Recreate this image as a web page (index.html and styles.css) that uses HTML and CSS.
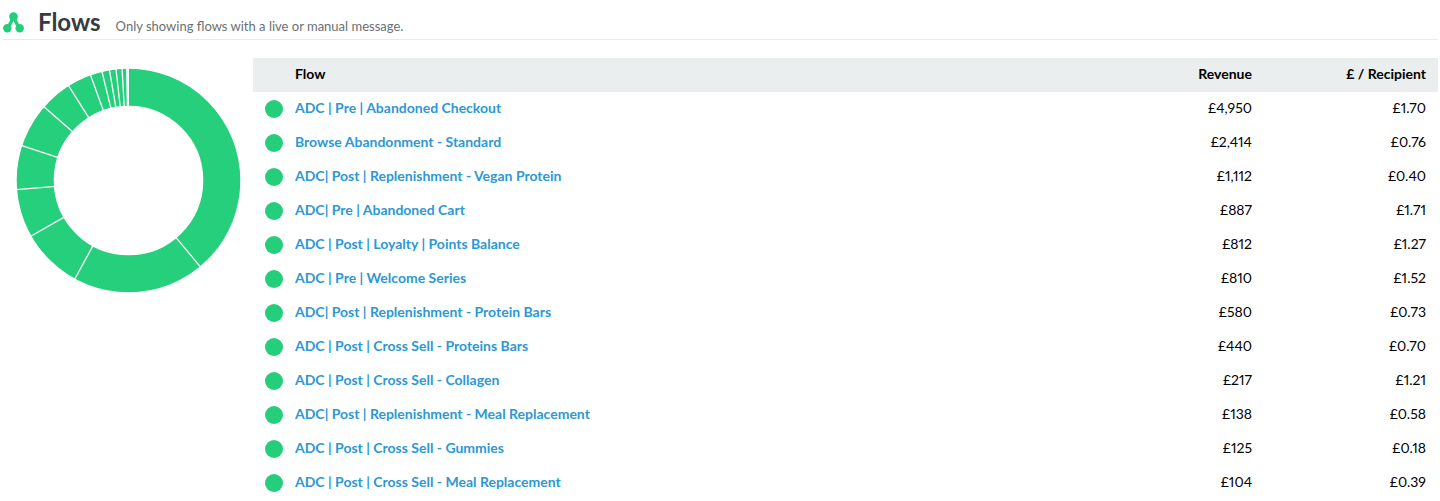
FILE: index.html
```
<!DOCTYPE html>
<html lang="en">
<head>
    <meta charset="UTF-8">
    <title>Flows</title>
    <meta name="viewport" content="width=device-width, initial-scale=1.0">
    <link rel="stylesheet" href="styles.css">
</head>
<body>
    <header class="section-header">
        <svg class="flows-icon" viewBox="0 0 21 21" aria-hidden="true">
            <path d="M6 14L10.500 5L15 14" fill="none" stroke="#24ce7b" stroke-width="3.400"/>
            <circle cx="10.500" cy="4.500" r="4.300"/>
            <circle cx="4.300" cy="16.300" r="4.200"/>
            <circle cx="16.700" cy="16.300" r="4.200"/>
        </svg>
        <h2>Flows</h2>
        <p>Only showing flows with a live or manual message.</p>
    </header>
    <main class="content">
        <svg class="donut" viewBox="-112.500 -112.500 225 225" role="img" aria-label="Revenue by flow">
            <circle class="ring" r="93.300"/>
            <g class="dividers">
                <line y1="-113" y2="-73" transform="rotate(140.200)"/>
                <line y1="-113" y2="-73" transform="rotate(208.600)"/>
                <line y1="-113" y2="-73" transform="rotate(240.300)"/>
                <line y1="-113" y2="-73" transform="rotate(265.400)"/>
                <line y1="-113" y2="-73" transform="rotate(288.100)"/>
                <line y1="-113" y2="-73" transform="rotate(311.100)"/>
                <line y1="-113" y2="-73" transform="rotate(327.700)"/>
                <line y1="-113" y2="-73" transform="rotate(340.200)"/>
                <line y1="-113" y2="-73" transform="rotate(346.300)"/>
                <line y1="-113" y2="-73" transform="rotate(350.200)"/>
                <line y1="-113" y2="-73" transform="rotate(353.600)"/>
                <line y1="-113" y2="-73" transform="rotate(356.700)"/>
            </g>
            <path class="rest" d="M0.500 -113L-2.400 -113L-1.800 -73L0.500 -73Z"/>
        </svg>
        <table class="flows">
            <thead>
                <tr><th class="status"></th><th>Flow</th><th class="num">Revenue</th><th class="num">£ / Recipient</th></tr>
            </thead>
            <tbody>
                <tr><td><span class="dot"></span></td><td><a href="#">ADC | Pre | Abandoned Checkout</a></td><td class="num">£4,950</td><td class="num">£1.70</td></tr>
                <tr><td><span class="dot"></span></td><td><a href="#">Browse Abandonment - Standard</a></td><td class="num">£2,414</td><td class="num">£0.76</td></tr>
                <tr><td><span class="dot"></span></td><td><a href="#">ADC| Post | Replenishment - Vegan Protein</a></td><td class="num">£1,112</td><td class="num">£0.40</td></tr>
                <tr><td><span class="dot"></span></td><td><a href="#">ADC| Pre | Abandoned Cart</a></td><td class="num">£887</td><td class="num">£1.71</td></tr>
                <tr><td><span class="dot"></span></td><td><a href="#">ADC | Post | Loyalty | Points Balance</a></td><td class="num">£812</td><td class="num">£1.27</td></tr>
                <tr><td><span class="dot"></span></td><td><a href="#">ADC | Pre | Welcome Series</a></td><td class="num">£810</td><td class="num">£1.52</td></tr>
                <tr><td><span class="dot"></span></td><td><a href="#">ADC| Post | Replenishment - Protein Bars</a></td><td class="num">£580</td><td class="num">£0.73</td></tr>
                <tr><td><span class="dot"></span></td><td><a href="#">ADC | Post | Cross Sell - Proteins Bars</a></td><td class="num">£440</td><td class="num">£0.70</td></tr>
                <tr><td><span class="dot"></span></td><td><a href="#">ADC | Post | Cross Sell - Collagen</a></td><td class="num">£217</td><td class="num">£1.21</td></tr>
                <tr><td><span class="dot"></span></td><td><a href="#">ADC| Post | Replenishment - Meal Replacement</a></td><td class="num">£138</td><td class="num">£0.58</td></tr>
                <tr><td><span class="dot"></span></td><td><a href="#">ADC | Post | Cross Sell - Gummies</a></td><td class="num">£125</td><td class="num">£0.18</td></tr>
                <tr><td><span class="dot"></span></td><td><a href="#">ADC | Post | Cross Sell - Meal Replacement</a></td><td class="num">£104</td><td class="num">£0.39</td></tr>
            </tbody>
        </table>
    </main>
</body>
</html>
```
FILE: styles.css
```
* { box-sizing: border-box; }
body { margin: 0; padding: 0 2px 0 3px; background: #fff; color: #000; font-family: Lato, Roboto, sans-serif; font-size: 14px; }
.section-header { display: flex; align-items: baseline; padding: 6px 0 1px; border-bottom: 1px solid #e9ebeb; }
.section-header h2 { margin: 0 15px 0 14px; color: #373b3f; font-size: 24px; line-height: 32px; font-weight: bold; }
.section-header p { margin: 0; color: #6b6f73; font-size: 13px; }
.flows-icon { width: 21px; height: 21px; align-self: center; fill: #24ce7b; }
.content { display: flex; align-items: flex-start; padding-top: 18px; }
.donut { flex: none; width: 225px; height: 225px; margin: 10px 12px 0 13px; }
.ring { fill: none; stroke: #26cf7c; stroke-width: 37px; }
.dividers { stroke: #fff; stroke-width: 1.3px; }
.rest { fill: #fff; }
.flows { flex: 1; border-collapse: collapse; }
.flows th, .flows td { height: 34px; padding: 0 12px 2px 0; text-align: left; line-height: 20px; }
.flows th { background: #eaeeee; }
.flows th:first-child, .flows td:first-child { padding: 0 12px; }
.flows .status { width: 42px; }
.flows .num { width: 174px; text-align: right; font-variant-numeric: proportional-nums; }
.flows a { color: #2c98d5; font-weight: bold; text-decoration: none; }
.flows a:hover { text-decoration: underline; }
.dot { display: block; width: 18px; height: 18px; border-radius: 50%; background: #24ce7b; }
```
